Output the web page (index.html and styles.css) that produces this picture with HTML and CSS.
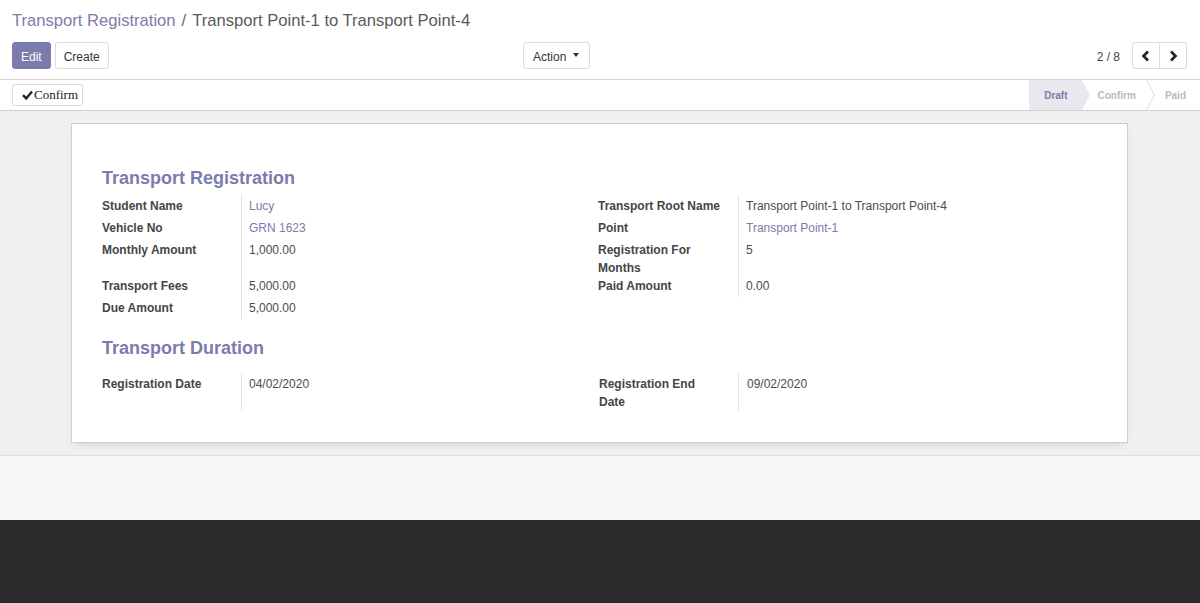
FILE: index.html
```html
<!DOCTYPE html>
<html>
<head>
<meta charset="utf-8">
<title>Transport Registration</title>
<link rel="stylesheet" href="styles.css">
</head>
<body>
<div class="app">
  <div class="cp">
    <div class="breadcrumb">
      <a class="bc-link">Transport Registration</a><span class="bc-sep">/</span><span class="bc-active">Transport Point-1 to Transport Point-4</span>
    </div>
    <div class="cp-row">
      <div class="cp-left">
        <div class="btns">
          <button class="btn btn-primary">Edit</button>
          <button class="btn">Create</button>
        </div>
        <button class="btn btn-action">Action <span class="caret"></span></button>
      </div>
      <div class="cp-right">
        <span class="pager-value">2 / 8</span>
        <div class="pager-btns">
          <button class="pager-btn"><svg width="10" height="12" viewBox="0 0 10 12"><path d="M7 1.5 L2.5 6 L7 10.5" fill="none" stroke="#222" stroke-width="2.6"/></svg></button>
          <button class="pager-btn"><svg width="10" height="12" viewBox="0 0 10 12"><path d="M3 1.5 L7.5 6 L3 10.5" fill="none" stroke="#222" stroke-width="2.6"/></svg></button>
        </div>
      </div>
    </div>
  </div>

  <div class="statusbar">
    <button class="btn-confirm"><svg width="11" height="10" viewBox="0 0 11 10"><path d="M1 5.2 L4.2 8.4 L10 1.4" fill="none" stroke="#222" stroke-width="2.4"/></svg>Confirm</button>
    <div class="status">
      <span class="st st-active">Draft</span>
      <span class="st">Confirm</span>
      <svg class="st-sep" width="10" height="30" viewBox="0 0 10 30"><path d="M0.5 0 L8.5 15 L0.5 30" fill="none" stroke="#dcdcdc" stroke-width="1"/></svg>
      <span class="st st-last">Paid</span>
    </div>
  </div>

  <div class="sheet-bg">
    <div class="sheet">
      <h2 class="sec-title">Transport Registration</h2>
      <div class="groups">
        <div class="group g5">
          <div class="lbl">Student Name</div><div class="val link">Lucy</div>
          <div class="lbl">Vehicle No</div><div class="val link">GRN 1623</div>
          <div class="lbl">Monthly Amount</div><div class="val">1,000.00</div>
          <div class="lbl">Transport Fees</div><div class="val">5,000.00</div>
          <div class="lbl">Due Amount</div><div class="val">5,000.00</div>
        </div>
        <div class="group g4">
          <div class="lbl">Transport Root Name</div><div class="val">Transport Point-1 to Transport Point-4</div>
          <div class="lbl">Point</div><div class="val link">Transport Point-1</div>
          <div class="lbl lbl-wrap">Registration For Months</div><div class="val">5</div>
          <div class="lbl">Paid Amount</div><div class="val">0.00</div>
        </div>
      </div>
      <h2 class="sec-title sec-2">Transport Duration</h2>
      <div class="groups">
        <div class="group g1">
          <div class="lbl">Registration Date</div><div class="val">04/02/2020</div>
        </div>
        <div class="group g1 g1-right">
          <div class="lbl lbl-wrap">Registration End Date</div><div class="val">09/02/2020</div>
        </div>
      </div>
    </div>
  </div>
  <div class="below"></div>
</div>
</body>
</html>
```

FILE: styles.css
```css
* { box-sizing: border-box; }

body {
  margin: 0;
  font-family: "Liberation Sans", Arial, sans-serif;
  font-size: 12px;
  color: #4c4c4c;
  background: #2a2a2c;
}

.app { background: #fff; }

/* control panel */
.cp {
  padding: 9px 13px 10px 12px;
  border-bottom: 1px solid #d6d6d6;
}

.breadcrumb {
  height: 24px;
  line-height: 24px;
  font-size: 16.6px;
  white-space: nowrap;
}
.bc-link { color: #7c7bad; }
.bc-sep { color: #666; margin: 0 6px; }
.bc-active { color: #5a5a5a; }

.cp-row {
  margin-top: 9px;
  height: 27px;
  display: flex;
  align-items: center;
}

.cp-left {
  width: 578px;
  display: flex;
  justify-content: space-between;
}

.btns { display: flex; gap: 4px; }

.btn {
  height: 27px;
  padding: 2px 8px 0 8px;
  border: 1px solid #dcdcdc;
  border-radius: 3px;
  background: #fff;
  color: #333;
  font-family: "Liberation Sans", Arial, sans-serif;
  font-size: 12px;
  display: inline-flex;
  align-items: center;
  cursor: pointer;
}

.btn-primary {
  background: #7c7bad;
  border-color: #7c7bad;
  color: #fff;
}

.btn-action {
  width: 67px;
  padding: 2px 9px 0 9px;
  gap: 7px;
}

.caret {
  display: inline-block;
  width: 0;
  height: 0;
  border-left: 3.5px solid transparent;
  border-right: 3.5px solid transparent;
  border-top: 4px solid #333;
  margin-top: -3px;
}

.cp-right {
  flex: 1;
  display: flex;
  justify-content: flex-end;
  align-items: center;
  gap: 12px;
}

.pager-value { color: #444; font-size: 12px; padding-top: 2px; }

.pager-btns { display: flex; }

.pager-btn {
  width: 28px;
  height: 27px;
  border: 1px solid #dcdcdc;
  background: #fff;
  padding: 0;
  display: flex;
  align-items: center;
  justify-content: center;
}
.pager-btn:first-child { border-radius: 3px 0 0 3px; width: 28px; }
.pager-btn:last-child { border-radius: 0 3px 3px 0; border-left: none; width: 27px; }

/* status bar */
.statusbar {
  height: 31px;
  border-bottom: 1px solid #d0d0d0;
  display: flex;
  justify-content: space-between;
  align-items: flex-start;
  padding-left: 12px;
}

.btn-confirm {
  margin-top: 4px;
  height: 22px;
  width: 71px;
  padding: 0 0 0 9px;
  border: 1px solid #dcdcdc;
  border-radius: 2px;
  background: #fff;
  color: #222;
  font-family: "Liberation Serif", "Times New Roman", serif;
  font-size: 13px;
  display: flex;
  align-items: center;
  gap: 1px;
}

.status {
  display: flex;
  height: 30px;
  align-items: stretch;
}

.st {
  position: relative;
  height: 30px;
  line-height: 30px;
  padding-top: 1px;
  font-size: 10px;
  font-weight: bold;
  color: #b9b9c2;
  padding-left: 16px;
  padding-right: 10px;
}

.st-active {
  background: #e8e8ee;
  color: #7c7bad;
  padding-left: 15px;
  padding-right: 14px;
}
.st-active::after {
  content: "";
  position: absolute;
  left: 100%;
  top: 0;
  border-left: 8px solid #e8e8ee;
  border-top: 15px solid transparent;
  border-bottom: 15px solid transparent;
  z-index: 1;
}

.st-sep { display: block; }

.st-last { padding-left: 9px; padding-right: 14px; }

/* sheet */
.sheet-bg {
  padding: 12px 0;
  border-bottom: 1px solid #dedede;
  background: repeating-conic-gradient(#ececec 0 25%, #f4f4f4 0 50%) 0 0 / 4px 4px;
}

.sheet {
  width: 1057px;
  margin: 0 0 0 71px;
  background: #fff;
  border: 1px solid #cdcdd6;
  box-shadow: 0 4px 10px -6px rgba(0, 0, 0, 0.25);
  padding: 42px 30px 31px 30px;
}

.sec-title {
  margin: 0 0 5px 0;
  height: 24px;
  line-height: 24px;
  font-size: 18px;
  font-weight: bold;
  color: #7c7bad;
}

.sec-2 { margin: 17px 0 13px 0; }

.groups {
  display: grid;
  grid-template-columns: 496px 1fr;
}

.group {
  display: grid;
  grid-template-columns: 139px 1fr;
  align-content: start;
}

.g4 { grid-template-columns: 140px 1fr; }

.g5 { grid-template-rows: 22px 22px 36px 22px 22px; }
.g4 { grid-template-rows: 22px 22px 36px 22px; }
.g1 { grid-template-rows: 38px; }
.g1-right { padding-left: 1px; }

.lbl, .val {
  padding-top: 2px;
  line-height: 18px;
  font-size: 12px;
}

.lbl {
  font-weight: bold;
  color: #454545;
  padding-right: 4px;
  white-space: nowrap;
}

.lbl-wrap {
  white-space: normal;
  padding-right: 30px;
}

.val {
  border-left: 1px solid #e2e2e2;
  padding-left: 7px;
  color: #4c4c4c;
}
.g1-right .val { padding-left: 8px; }

.val.link { color: #7c7bad; }

.below {
  height: 64px;
  background: #f7f7f7;
}
```
